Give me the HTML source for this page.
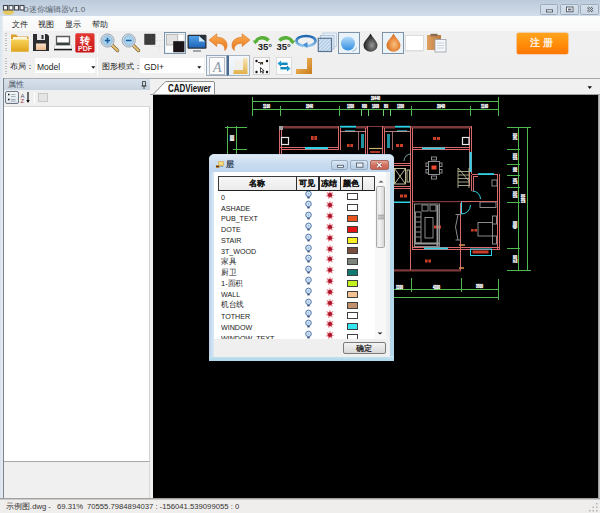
<!DOCTYPE html>
<html><head><meta charset="utf-8">
<style>
*{margin:0;padding:0;box-sizing:border-box}
html,body{width:600px;height:513px;overflow:hidden;background:#f0f0f0;font-family:"Liberation Sans",sans-serif;font-size:9px;color:#000}
.a{position:absolute}
.t{position:absolute;white-space:nowrap;line-height:1}
#title{left:0;top:0;width:600px;height:16px;background:linear-gradient(#bccbdc,#d2dde9)}
#menu{left:3px;top:16px;width:597px;height:15px;background:linear-gradient(#fbfcfd,#f8f8f7)}
#tb1{left:3px;top:31px;width:597px;height:24px;background:#f0f0f0}
#tb2{left:3px;top:55px;width:597px;height:23px;background:#efefef}
#lframe{left:0;top:16px;width:3px;height:483px;background:linear-gradient(90deg,#dae3ed,#e6ecf3)}
#rframe{left:598px;top:79px;width:2px;height:421px;background:linear-gradient(90deg,#8c8c8c,#d4d4d4)}
#lp{left:3px;top:78px;width:150px;height:420px;background:#f0f0f0;border-left:1px solid #7e848c}
#lphead{left:4px;top:78px;width:147px;height:11.5px;background:linear-gradient(#d8e2ec,#c6d2df);border-top:1px solid #a8aeb4}
#list{left:4px;top:106px;width:146px;height:356px;background:#fff;border-bottom:1px solid #a8a8a8;border-top:1px solid #d8d8d8;border-right:1px solid #d0d0d0}
#lower{left:4px;top:462px;width:146px;height:36px;border-right:1px solid #d8d8d8}
#tabstrip{left:150px;top:78px;width:450px;height:17px;background:#f0f0f0;border-top:1.5px solid #a8a8a8;border-bottom:1.5px solid #a0a0a0}
#view{left:153px;top:95px;width:445px;height:403px;background:#000}
#status{left:0;top:498px;width:600px;height:15px;background:linear-gradient(#8a8a8a 0,#b8b8b8 1px,#dcdcdc 2px,#efeeec 2px)}
.sep{position:absolute;width:1px;background:#c8ccd2;border-right:1px solid #fff}
.grip{position:absolute;width:1.5px;background:repeating-linear-gradient(#bcc2c8 0 1px,transparent 1px 2.5px)}
.mb2{position:absolute;top:160px;height:9.5px;border:1px solid #98acc2;border-radius:2px;background:linear-gradient(#dce8f4,#c6d8ea 50%,#b8cee4)}
.mbtn{position:absolute;top:4px;height:11px;border:1px solid #9cadc0;border-radius:1.5px;background:linear-gradient(#d6e0eb,#ccd8e5)}
</style></head><body>
<div id="title" class="a"></div>
<div id="lframe" class="a"></div>
<div id="rframe" class="a"></div>
<div id="menu" class="a"></div>
<div id="tb1" class="a"></div>
<div id="tb2" class="a"></div>
<div id="lp" class="a"></div>
<div id="lphead" class="a"></div>
<div id="list" class="a"></div>
<div id="lower" class="a"></div>
<div id="tabstrip" class="a"></div>
<div id="view" class="a"></div>
<div id="status" class="a"></div>

<!-- title -->
<div class="t" style="left:23px;top:5.5px;font-size:8px;color:#5a6470">D迷你编辑器V1.0</div>
<div class="mbtn" style="left:540px;width:18px"></div>
<div class="mbtn" style="left:560px;width:19px"></div>
<div class="mbtn" style="left:580px;width:19px"></div>
<svg class="a" style="left:540px;top:4px" width="60" height="11" viewBox="0 0 60 11">
 <rect x="6.5" y="5.8" width="6" height="2.2" fill="#fff" stroke="#4a5460" stroke-width="0.9"/>
 <rect x="26.5" y="3" width="6.5" height="4.8" fill="#fff" stroke="#4a5460" stroke-width="0.9"/>
 <rect x="28" y="4.5" width="3.5" height="2" fill="#6a7480"/>
 <path d="M47.8 3.2l5 4.6M52.8 3.2l-5 4.6" stroke="#4a5460" stroke-width="2.2"/>
 <path d="M47.8 3.2l5 4.6M52.8 3.2l-5 4.6" stroke="#f4f6f8" stroke-width="0.9"/>
</svg>
<svg class="a" style="left:2px;top:4px" width="24" height="11" viewBox="0 0 24 11">
 <ellipse cx="6.5" cy="8" rx="5.5" ry="3" fill="#eac64a" opacity="0.85"/>
 <g fill="#f4f4f4" stroke="#3e4650" stroke-width="1.1">
  <rect x="1.5" y="1.5" width="4" height="4.5"/><rect x="7" y="1.5" width="4" height="4.5"/>
  <rect x="12.5" y="1.5" width="4" height="4.5"/><rect x="18" y="1.5" width="4" height="4.5"/>
 </g>
</svg>

<!-- toolbar1 -->
<div class="grip" style="left:5px;top:33px;height:20px"></div>
<svg class="a" style="left:10px;top:32px" width="20" height="21" viewBox="0 0 20 21">
 <defs><linearGradient id="fg" x1="0" y1="0" x2="0" y2="1"><stop offset="0" stop-color="#f7d35a"/><stop offset="1" stop-color="#e1a41c"/></linearGradient></defs>
 <path d="M1 2.5h5l2 2h10.5v15H1z" fill="#d9a030"/>
 <path d="M3 5h14v5H3z" fill="#fbf3dc"/>
 <path d="M1 7.5h17.5v12H1z" fill="url(#fg)"/>
 <path d="M1 7.5h17.5" stroke="#f9e6a0" stroke-width="1"/>
</svg>
<svg class="a" style="left:32px;top:33px" width="18" height="19" viewBox="0 0 18 19">
 <path d="M1 1h14l2 2v15H1z" fill="#2b2d30"/>
 <path d="M5 1h8v6H5z" fill="#e8e8e8"/>
 <path d="M9.5 2h2v4h-2z" fill="#2b2d30"/>
 <defs><linearGradient id="lg" x1="0" y1="0" x2="0" y2="1"><stop offset="0" stop-color="#fbe2c8"/><stop offset="1" stop-color="#e9b98c"/></linearGradient></defs>
 <path d="M4 10.5h10V17h-10z" fill="url(#lg)"/>
</svg>
<svg class="a" style="left:53px;top:34px" width="20" height="18" viewBox="0 0 20 18">
 <path d="M3.5 2.5h13v9h-13z" fill="#fdfdfd" stroke="#5a5a5a" stroke-width="1.3"/>
 <path d="M5 4h10v4.2H5z" fill="#ffffff"/>
 <path d="M4 8.5h12v3h-12z" fill="#3a4240"/>
 <path d="M1.5 11.5h17v3.5h-17z" fill="#fbfbfb" stroke="#c4c4c4" stroke-width="0.6"/>
 <path d="M1 15.6h18" stroke="#1a1a1a" stroke-width="1.5"/>
</svg>
<svg class="a" style="left:75px;top:33px" width="20" height="20" viewBox="0 0 20 20">
 <defs><linearGradient id="pg" x1="0" y1="0" x2="0" y2="1"><stop offset="0" stop-color="#e23a32"/><stop offset="1" stop-color="#c8141a"/></linearGradient></defs>
 <rect x="0.3" y="0.3" width="19.2" height="19.2" rx="1.5" fill="url(#pg)"/>
 <text x="10" y="10.8" font-size="10" font-weight="700" fill="#fff" text-anchor="middle" font-family="Liberation Sans">转</text>
 <text x="10" y="18.2" font-size="7" font-weight="700" fill="#fce8e8" text-anchor="middle" font-family="Liberation Sans" textLength="14" lengthAdjust="spacingAndGlyphs">PDF</text>
</svg>
<div class="sep" style="left:97px;top:33px;height:20px"></div>
<svg class="a" style="left:100px;top:33px" width="20" height="20" viewBox="0 0 20 20">
 <path d="M12.5 12.5l5 5" stroke="#7a6a40" stroke-width="3.4" stroke-linecap="round"/>
 <path d="M12.5 12.5l5 5" stroke="#e8c070" stroke-width="2" stroke-linecap="round"/>
 <circle cx="7.5" cy="7.5" r="6.6" fill="#d8dee6" stroke="#9aa8b6" stroke-width="1"/>
 <circle cx="7.5" cy="7.5" r="4.8" fill="#a8d6f2" stroke="#7aa0c0" stroke-width="0.6"/>
 <path d="M7.5 4.8v5.4M4.8 7.5h5.4" stroke="#1c5a9c" stroke-width="1.5"/>
</svg>
<svg class="a" style="left:121px;top:33px" width="20" height="20" viewBox="0 0 20 20">
 <path d="M12.5 12.5l5 5" stroke="#7a6a40" stroke-width="3.4" stroke-linecap="round"/>
 <path d="M12.5 12.5l5 5" stroke="#e8c070" stroke-width="2" stroke-linecap="round"/>
 <circle cx="7.7" cy="7.5" r="6.6" fill="#d8dee6" stroke="#9aa8b6" stroke-width="1"/>
 <circle cx="7.7" cy="7.5" r="4.8" fill="#a8d6f2" stroke="#7aa0c0" stroke-width="0.6"/>
 <path d="M4.9 7.5h5.6" stroke="#1c5a9c" stroke-width="1.5"/>
</svg>
<svg class="a" style="left:143px;top:33px" width="22" height="21" viewBox="0 0 22 21">
 <rect x="1.3" y="0.8" width="11" height="11" fill="#3a3a3a"/>
 <path d="M5 1v11M8.5 1v11M1.5 4.5h11M1.5 8h11" stroke="#444" stroke-width="0.5"/>
 <path d="M13 7.5h7M16 11v9M8 13.5h12" stroke="#e4e4e4" stroke-width="0.8"/>
</svg>
<div class="a" style="left:164px;top:32px;width:22px;height:22px;border:1px solid #7f93a8;background:#e9f1f9"></div>
<svg class="a" style="left:165px;top:33px" width="20" height="20" viewBox="0 0 20 20">
 <rect x="1" y="1" width="18" height="18" fill="#fafcfd"/>
 <rect x="1.5" y="1.5" width="11" height="10.5" fill="#e2e2e2" stroke="#9a9a9a" stroke-width="0.6"/>
 <rect x="13" y="1.5" width="6" height="6.5" fill="#fff" stroke="#ccc" stroke-width="0.5"/>
 <rect x="8.2" y="8.2" width="11.2" height="11" fill="#1b151a"/>
</svg>
<svg class="a" style="left:187px;top:34px" width="20" height="19" viewBox="0 0 20 19">
 <defs><linearGradient id="mg" x1="0" y1="0" x2="0" y2="1"><stop offset="0" stop-color="#4fa0e8"/><stop offset="1" stop-color="#1f66b8"/></linearGradient></defs>
 <rect x="0.5" y="0.8" width="19" height="14" rx="1" fill="#2a2f36"/>
 <rect x="1.8" y="2" width="16.4" height="11.5" fill="url(#mg)"/>
 <path d="M12 2h6.2v5.5z" fill="#2a2f36"/>
 <path d="M12 2l6.2 5.5H12z" fill="#cfe9fb"/>
 <path d="M6 16h8v2H6z" fill="#a0a4a8"/>
</svg>
<svg class="a" style="left:208px;top:33px" width="20" height="19" viewBox="0 0 20 19">
 <defs><linearGradient id="ug" x1="0" y1="0" x2="0" y2="1"><stop offset="0" stop-color="#fbae55"/><stop offset="1" stop-color="#e9761b"/></linearGradient></defs>
 <path d="M1 7L8.8 0.8V4.3C15 4.3 19 7.5 19 12.2C19 14.6 18 16.3 16.8 17.5C17.2 13 14.5 10.2 8.8 10.2V13.5Z" fill="url(#ug)" stroke="#d8701c" stroke-width="0.6"/>
</svg>
<svg class="a" style="left:231px;top:33px" width="20" height="19" viewBox="0 0 20 19">
 <path transform="matrix(-1 0 0 1 20 0)" d="M1 7L8.8 0.8V4.3C15 4.3 19 7.5 19 12.2C19 14.6 18 16.3 16.8 17.5C17.2 13 14.5 10.2 8.8 10.2V13.5Z" fill="url(#ug)" stroke="#d8701c" stroke-width="0.6"/>
</svg>
<svg class="a" style="left:252px;top:34px" width="22" height="19" viewBox="0 0 22 19">
 <path d="M2.2 7.5C4 2 12.5 -0.5 17.8 5.2C16.8 6.4 15.8 7.2 15.2 7.8C11.5 4.6 6.5 5 5.2 8.4Z" fill="#58b038"/>
 <path d="M0.6 6.4L6.6 7L3.2 10.2z" fill="#58b038"/>
 <text x="5.8" y="15.6" font-size="9.5" font-weight="700" fill="#1e1e1e" font-family="Liberation Sans">35°</text>
</svg>
<svg class="a" style="left:274px;top:34px" width="22" height="19" viewBox="0 0 22 19">
 <path transform="matrix(-1 0 0 1 22 0)" d="M2.2 7.5C4 2 12.5 -0.5 17.8 5.2C16.8 6.4 15.8 7.2 15.2 7.8C11.5 4.6 6.5 5 5.2 8.4Z" fill="#58b038"/>
 <path transform="matrix(-1 0 0 1 22 0)" d="M0.6 6.4L6.6 7L3.2 10.2z" fill="#58b038"/>
 <text x="2.5" y="15.8" font-size="9.5" font-weight="700" fill="#222" font-family="Liberation Sans">35°</text>
</svg>
<svg class="a" style="left:295px;top:34px" width="22" height="15" viewBox="0 0 22 15">
 <defs><linearGradient id="og" x1="0" y1="0" x2="0" y2="1"><stop offset="0" stop-color="#1a64b0"/><stop offset="1" stop-color="#8cc4ee"/></linearGradient></defs>
 <ellipse cx="11" cy="7" rx="9.5" ry="5" fill="none" stroke="url(#og)" stroke-width="2.6"/>
 <path d="M8 10.5l4.5-2.5v6z" fill="#4a8ed0"/>
</svg>
<svg class="a" style="left:317px;top:32px" width="21" height="21" viewBox="0 0 21 21">
 <defs><pattern id="hp" width="2.5" height="2.5" patternUnits="userSpaceOnUse" patternTransform="rotate(45)"><rect width="2.5" height="2.5" fill="#d6e6f6"/><rect width="1" height="2.5" fill="#a9c3de"/></pattern></defs>
 <rect x="6" y="1" width="13.5" height="13.5" fill="#e6eff8" stroke="#b8cadc" stroke-width="0.8"/>
 <rect x="3.5" y="3.5" width="13.5" height="13.5" fill="#dde9f5" stroke="#a8bcd2" stroke-width="0.8"/>
 <rect x="1.3" y="6.3" width="13.2" height="13.2" fill="url(#hp)" stroke="#5a7594" stroke-width="1.2"/>
</svg>
<div class="a" style="left:338px;top:32px;width:22px;height:22px;border:1px solid #7f93a8;background:#eaf2fa"></div>
<svg class="a" style="left:340px;top:36px" width="18" height="16" viewBox="0 0 18 16">
 <defs><linearGradient id="sg" x1="0" y1="0" x2="0" y2="1"><stop offset="0" stop-color="#b5dcfa"/><stop offset="1" stop-color="#2f8ee0"/></linearGradient></defs>
 <circle cx="8" cy="7.5" r="7" fill="url(#sg)"/>
 <path d="M16.5 11.5C16 13.5 14.5 14.8 12.5 15.2" fill="none" stroke="#7aa0c0" stroke-width="0.8"/>
</svg>
<svg class="a" style="left:362px;top:33px" width="17" height="19" viewBox="0 0 17 19">
 <defs><radialGradient id="dk" cx="0.6" cy="0.65" r="0.6"><stop offset="0" stop-color="#9a9a9a"/><stop offset="0.5" stop-color="#555"/><stop offset="1" stop-color="#1e1e1e"/></radialGradient></defs>
 <path d="M8.5 0.5C10 4 15.5 8.5 15.5 12.2A7 6.5 0 0 1 1.5 12.2C1.5 8.5 7 4 8.5 0.5Z" fill="url(#dk)"/>
</svg>
<div class="a" style="left:382px;top:32px;width:22px;height:22px;border:1px solid #7f93a8;background:#eaf2fa"></div>
<svg class="a" style="left:385px;top:33px" width="17" height="19" viewBox="0 0 17 19">
 <defs><radialGradient id="or" cx="0.55" cy="0.6" r="0.6"><stop offset="0" stop-color="#f8c080"/><stop offset="0.6" stop-color="#e8883a"/><stop offset="1" stop-color="#c86a20"/></radialGradient></defs>
 <path d="M8.5 0.5C10 4 15.5 8.5 15.5 12.2A7 6.5 0 0 1 1.5 12.2C1.5 8.5 7 4 8.5 0.5Z" fill="url(#or)"/>
</svg>
<div class="a" style="left:405px;top:35px;width:19px;height:16px;background:#fff;border:1px solid #dcdcdc;box-shadow:0 1px 0 #e6e6e6"></div>
<svg class="a" style="left:426px;top:33px" width="21" height="20" viewBox="0 0 21 20">
 <defs><linearGradient id="cb" x1="0" y1="0" x2="1" y2="0"><stop offset="0" stop-color="#e0a060"/><stop offset="1" stop-color="#b87a40"/></linearGradient></defs>
 <rect x="1" y="2" width="14" height="15" fill="url(#cb)"/>
 <rect x="4.5" y="0.8" width="7" height="2.5" fill="#8a6a50"/>
 <rect x="9" y="6.5" width="11" height="12.5" fill="#f4f6fa" stroke="#9aa0a8" stroke-width="0.8"/>
 <path d="M11 10h7M11 12.5h7M11 15h7" stroke="#c0c8d8" stroke-width="0.8"/>
</svg>
<div class="a" style="left:517px;top:33px;width:51px;height:20.5px;border-radius:1.5px;background:linear-gradient(#ffa41c,#ff8a08 60%,#ff7600);box-shadow:0 0 0 0.6px #f0b070"></div>
<div class="t" style="left:530px;top:38px;font-size:10px;font-weight:700;color:#fff4e4">注 册</div>

<!-- menu -->
<div class="t" style="left:12px;top:20.5px;font-size:8px;color:#222">文件</div>
<div class="t" style="left:38px;top:20.5px;font-size:8px;color:#222">视图</div>
<div class="t" style="left:65px;top:20.5px;font-size:8px;color:#222">显示</div>
<div class="t" style="left:92px;top:20.5px;font-size:8px;color:#222">帮助</div>

<!-- toolbar2 -->
<div class="grip" style="left:5px;top:58px;height:18px"></div>
<div class="t" style="left:10px;top:63px;font-size:8px;color:#222">布局：</div>
<div class="a" style="left:35px;top:58px;width:60px;height:15px;background:#fff"></div>
<div class="t" style="left:37px;top:63px;font-size:8.5px;color:#222">Model</div>
<svg class="a" style="left:90.5px;top:65.5px" width="5" height="4"><path d="M0.3 0.3h4l-2 2.4z" fill="#111"/></svg>
<div class="sep" style="left:97px;top:57px;height:19px"></div>
<div class="t" style="left:102px;top:63px;font-size:8px;color:#222">图形模式：</div>
<div class="a" style="left:140px;top:58px;width:64px;height:15px;background:#fff"></div>
<div class="t" style="left:144px;top:63px;font-size:8.5px;color:#222">GDI+</div>
<svg class="a" style="left:196.5px;top:65.5px" width="5" height="4"><path d="M0.3 0.3h4l-2 2.4z" fill="#111"/></svg>
<div class="sep" style="left:205px;top:57px;height:19px"></div>

<div class="a" style="left:206px;top:55px;width:21px;height:21px;border:1px solid #97a9bc;background:#eef4fa"></div>
<div class="a" style="left:209px;top:57px;width:16px;height:18px;border:1px solid #b8bcc2;background:#fbfbfb"></div>
<div class="t" style="left:213px;top:61px;font-family:'Liberation Serif',serif;font-style:italic;font-size:14px;color:#8a96a8">A</div>
<div class="a" style="left:227px;top:55px;width:23px;height:21px;border:1px solid #a5b5c6;border-left:2px solid #4a6a90;background:linear-gradient(#f4f8fc,#e6eef6)"></div>
<svg class="a" style="left:232px;top:57px" width="17" height="18" viewBox="0 0 17 18">
 <defs><linearGradient id="gl" x1="0" y1="0" x2="0" y2="1"><stop offset="0" stop-color="#f8e6b8"/><stop offset="1" stop-color="#e2b048"/></linearGradient></defs>
 <path d="M11 1h4.5v16H1.5v-4H11z" fill="url(#gl)"/>
 <path d="M3 3h8v10H3z" fill="#f2ece0" opacity="0.6"/>
</svg>
<div class="a" style="left:253px;top:57px;width:17px;height:18px;border:1px solid #d0d0d0;background:#fafafa"></div>
<svg class="a" style="left:253px;top:57px" width="17" height="18" viewBox="0 0 17 18">
 <circle cx="3.5" cy="4" r="1.2" fill="#111"/><circle cx="14" cy="4" r="1.2" fill="#111"/>
 <circle cx="3.5" cy="15" r="1.2" fill="#111"/><circle cx="14" cy="15" r="1.2" fill="#111"/>
 <path d="M5 5.5h2l0.8 1.5 0.8-1.5h1.5M9.5 5.5v2" stroke="#3a3020" stroke-width="1.1" fill="none"/>
 <path d="M7.5 10.5v5l1.2-1.2 1 2 0.8-0.4-1-2h1.6z" fill="#fff" stroke="#111" stroke-width="0.8"/>
</svg>
<div class="a" style="left:276px;top:57px;width:16px;height:18px;border:1px solid #dcdcdc;background:#fbfbfb"></div>
<svg class="a" style="left:276px;top:59px" width="16" height="14" viewBox="0 0 16 14">
 <path d="M1.5 4.5L5 1.5V3.5h6.5v2.5H5v1.5z" fill="#1c9ad0"/>
 <path d="M14.5 9.5L11 12.5V10.5H4.5V8H11V6.5z" fill="#1c9ad0"/>
 <path d="M4 6.5l2.5-1.5h5M12 7.5l-2.5 1.5h-5" stroke="#0a6a9a" stroke-width="0.8" fill="none"/>
</svg>
<svg class="a" style="left:295px;top:57px" width="18" height="18" viewBox="0 0 18 18">
 <defs><linearGradient id="gl2" x1="0" y1="0" x2="1" y2="1"><stop offset="0" stop-color="#f7c66a"/><stop offset="1" stop-color="#c87a1a"/></linearGradient></defs>
 <path d="M12 1h5v16H1v-5h11z" fill="url(#gl2)"/>
</svg>

<!-- left panel -->
<div class="t" style="left:8px;top:81px;font-size:8px;color:#4a5666">属性</div>
<svg class="a" style="left:141px;top:81px" width="6" height="8" viewBox="0 0 6 8"><path d="M1.5 0.5h3v4.5h-3z" fill="none" stroke="#444" stroke-width="0.9"/><path d="M0.5 5h5M3 5v3" stroke="#444" stroke-width="0.9"/></svg>

<!-- cad -->
<svg class="a" style="left:153px;top:94px" width="445" height="404" viewBox="153 94 445 404" shape-rendering="auto">
<g stroke="#50b850" stroke-width="1" fill="none">
 <path d="M252 101.5H498.5M252 109.5H498.5"/>
 <path d="M252.5 97V116M498.5 97V116M280.5 106V116M339.5 106V116M411.5 106V116M470.5 106V116"/>
 <path d="M361.5 116V109M368.5 116V109M383.5 116V109M390.5 116V109" stroke="#6ad06a"/>
 <path d="M227.5 126V154M236.5 126V154M225 127.5H247M233 149.5H247"/>
 <path d="M518.5 127V271M527.5 127V271M507 127.5H531M507 149.5H520M507 164.5H520M507 175.5H520M507 187.5H520M507 202.5H520M507 248.5H520M507 270.5H531"/>
 <path d="M393 289.5H498.5M393 297.5H498.5M498.5 279V300M411.5 278V292M461.5 278V292"/>
</g>
<g fill="#f0f0f0" stroke="#f0f0f0" stroke-width="0.5" font-family="Liberation Sans" font-size="5.4" font-weight="700">
<text x="371" y="100" textLength="9" lengthAdjust="spacingAndGlyphs">29440</text>
<text x="263" y="108" textLength="7" lengthAdjust="spacingAndGlyphs">1190</text>
<text x="306" y="108" textLength="7" lengthAdjust="spacingAndGlyphs">2940</text>
<text x="347" y="108" textLength="7" lengthAdjust="spacingAndGlyphs">1200</text>
<text x="362" y="108" textLength="5" lengthAdjust="spacingAndGlyphs">800</text>
<text x="372" y="108" textLength="7" lengthAdjust="spacingAndGlyphs">1000</text>
<text x="384" y="108" textLength="4" lengthAdjust="spacingAndGlyphs">800</text>
<text x="397" y="108" textLength="7" lengthAdjust="spacingAndGlyphs">1200</text>
<text x="437" y="108" textLength="8" lengthAdjust="spacingAndGlyphs">2940</text>
<text x="481" y="108" textLength="7" lengthAdjust="spacingAndGlyphs">1190</text>
<text x="396" y="289" textLength="7" lengthAdjust="spacingAndGlyphs">2200</text>
<text x="433" y="289" textLength="7" lengthAdjust="spacingAndGlyphs">4200</text>
<text x="476" y="288" textLength="7" lengthAdjust="spacingAndGlyphs">3500</text>
<text transform="translate(517.3 140) rotate(-90)" x="0" y="0" textLength="7" lengthAdjust="spacingAndGlyphs">2400</text>
<text transform="translate(517.3 160) rotate(-90)" x="0" y="0" textLength="7" lengthAdjust="spacingAndGlyphs">1500</text>
<text transform="translate(517.3 172) rotate(-90)" x="0" y="0" textLength="5" lengthAdjust="spacingAndGlyphs">900</text>
<text transform="translate(517.3 184) rotate(-90)" x="0" y="0" textLength="6" lengthAdjust="spacingAndGlyphs">1200</text>
<text transform="translate(517.3 198) rotate(-90)" x="0" y="0" textLength="7" lengthAdjust="spacingAndGlyphs">1500</text>
<text transform="translate(517.3 229) rotate(-90)" x="0" y="0" textLength="8" lengthAdjust="spacingAndGlyphs">4500</text>
<text transform="translate(517.3 263) rotate(-90)" x="0" y="0" textLength="8" lengthAdjust="spacingAndGlyphs">2100</text>
<text transform="translate(525.3 203) rotate(-90)" x="0" y="0" textLength="9" lengthAdjust="spacingAndGlyphs">12600</text>
<text transform="translate(234.3 141) rotate(-90)" x="0" y="0" textLength="6" lengthAdjust="spacingAndGlyphs">800</text>
</g>
<!-- brown top walls -->
<g fill="#7e3a3a">
 <rect x="279" y="126" width="60" height="2.5"/>
 <rect x="356" y="126" width="12" height="2.5"/>
 <rect x="368" y="126" width="15" height="1"/>
 <rect x="383" y="126" width="12" height="2.5"/>
 <rect x="411" y="126" width="61" height="2.5"/>
 <rect x="412" y="201" width="58" height="1.2"/>
 <rect x="393" y="269.3" width="68" height="2.2"/>
</g>
<!-- pink double walls -->
<g stroke="#d86a6a" stroke-width="1" fill="none">
 <path d="M279.5 126V154M281.5 129V154"/>
 <path d="M338.5 126V150M340.5 128V150"/>
 <path d="M280 147.5H338M282 149.5H338"/>
 <path d="M365.5 128V155M367.5 126V155"/>
 <path d="M382.5 126V155M384.5 128V155"/>
 <path d="M410.5 126V270M412.5 128V250"/>
 <path d="M469.5 128V186M471.5 126V174"/>
 <path d="M412 147.5H470M412 149.5H470"/>
 <path d="M393.5 163.5H411M393.5 165.5H411M393.5 186.5H411M394 188.5H411"/>
 <path d="M412 247.5H461M412 249.5H461"/>
 <path d="M460.5 203V270"/>
 <path d="M461 247.5H500M461 249.5H500"/>
 <path d="M497.5 174V250M499.5 174V250"/>
 <path d="M472 174.5H498M473 176.5H478"/>
</g>
<!-- cyan -->
<g fill="#2fd2e4">
 <rect x="305" y="147" width="23" height="2.2"/>
 <rect x="340" y="125.8" width="16" height="1.8"/>
 <rect x="395" y="125.8" width="15" height="1.8"/>
 <rect x="422" y="147.5" width="23" height="1.8"/>
 <rect x="469.5" y="152" width="2.2" height="20"/>
 <rect x="394" y="201.5" width="16" height="1.5"/>
 <rect x="424" y="247.5" width="24" height="1.8"/>
 <rect x="478" y="173.2" width="16" height="1.8"/>
 <rect x="361" y="134" width="3" height="14" opacity="0.7"/>
 <rect x="387" y="134" width="3" height="14" opacity="0.7"/>
 <rect x="345" y="130" width="10" height="2" opacity="0.6"/>
 <rect x="397" y="130" width="10" height="2" opacity="0.6"/>
</g>
<rect x="470.5" y="249" width="21" height="6.5" fill="none" stroke="#2fd2e4" stroke-width="1"/>
<rect x="472.5" y="250.5" width="16" height="3" fill="#c83a2a"/>
<!-- red text -->
<g fill="#f04a30">
<rect x="311" y="136" width="2.6" height="4" opacity="0.85"/><rect x="314.4" y="136" width="2.6" height="4" opacity="0.85"/>
<rect x="347" y="144" width="2.6" height="3" opacity="0.85"/><rect x="350.4" y="144" width="2.6" height="3" opacity="0.85"/>
<rect x="396" y="144" width="3.1" height="3" opacity="0.85"/><rect x="399.9" y="144" width="3.1" height="3" opacity="0.85"/>
<rect x="433" y="137" width="3.1" height="3" opacity="0.85"/><rect x="436.9" y="137" width="3.1" height="3" opacity="0.85"/>
<rect x="400" y="194.5" width="3.1" height="3" opacity="0.85"/><rect x="403.9" y="194.5" width="3.1" height="3" opacity="0.85"/>
<rect x="434" y="225.5" width="3.1" height="3" opacity="0.85"/><rect x="437.9" y="225.5" width="3.1" height="3" opacity="0.85"/>
<rect x="425" y="259.5" width="2.6" height="3" opacity="0.85"/><rect x="428.4" y="259.5" width="2.6" height="3" opacity="0.85"/>
<rect x="471" y="229" width="2.6" height="2.5" opacity="0.85"/><rect x="474.4" y="229" width="2.6" height="2.5" opacity="0.85"/>
<rect x="431.5" y="165.5" width="5" height="4"/>
<rect x="370" y="151" width="10" height="2" opacity="0.7"/>
</g>
<!-- white squares -->
<g stroke="#e8e8e8" stroke-width="1.2" fill="none">
 <rect x="281.5" y="137.5" width="7" height="7"/>
 <rect x="462.5" y="137.5" width="6.5" height="7"/>
</g>
<rect x="279" y="126" width="4" height="4" fill="#a0a0a0"/>
<!-- gray furniture -->
<g stroke="#9a9a9a" stroke-width="0.9" fill="none">
 <rect x="428.5" y="161.5" width="11" height="13"/>
 <rect x="431.5" y="157" width="5" height="3"/><rect x="431.5" y="176" width="5" height="3"/>
 <rect x="426" y="163" width="2.5" height="3.5"/><rect x="426" y="169.5" width="2.5" height="3.5"/>
 <rect x="439.5" y="163" width="2.5" height="3.5"/><rect x="439.5" y="169.5" width="2.5" height="3.5"/>
 <rect x="414.5" y="204" width="25" height="42.5"/>
 <path d="M437.5 205V246M415 243.5H439" stroke-width="2"/>
 <rect x="415.5" y="212" width="5.5" height="31"/>
 <path d="M415.5 217H421M415.5 222H421M415.5 227H421M415.5 232H421M415.5 237H421"/>
 <rect x="425" y="217.5" width="8" height="20.5"/>
 <rect x="422" y="205" width="6" height="6"/><rect x="430" y="205" width="6" height="6"/>
 <path d="M455.5 214.5H461M455.5 240H461M458 215L455.5 227L458 240"/>
 <rect x="478" y="222.5" width="14.5" height="13.5"/>
 <rect x="492.5" y="216" width="4" height="8"/><rect x="492.5" y="236" width="4" height="8"/>
 <rect x="480" y="202" width="16" height="5.5"/>
 <rect x="492" y="180" width="5" height="6"/>
 <path d="M404 161A7 7 0 0 1 411 154" stroke="#8ab0b0"/>
</g>
<!-- elevator -->
<g stroke="#d0cca0" stroke-width="0.9" fill="none">
 <rect x="394.5" y="168.5" width="11" height="15.5"/>
 <path d="M394.5 168.5L405.5 184M405.5 168.5L394.5 184"/>
 <rect x="407" y="170" width="2.5" height="12"/>
</g>
<!-- stairs -->
<g stroke="#c8c8a0" stroke-width="0.8" fill="none">
 <path d="M458 168V188M469 168V188M458 171.5H469M458 175H469M458 178.5H469M458 182H469M458 185.5H469M458 168L469 181"/>
 <path d="M369 148.5H382" stroke="#c8b070" stroke-width="1.2"/>
</g>
<!-- cyan door arcs -->
<g stroke="#2fd2e4" stroke-width="1" fill="none">
 <path d="M461.5 201V214"/>
 <path d="M461.5 214A9 9 0 0 0 470.5 205"/>
 <path d="M472.5 191A8 8 0 0 1 480.5 199"/>
</g>
<g stroke="#d06868" stroke-width="1" fill="none">
 <path d="M471.5 175V191M473.5 176V191"/>
 <path d="M340 131.5H366M385 131.5H410" stroke="#e0a0a0" stroke-width="0.8"/>
 <path d="M358.5 132V150M392.5 132V150" stroke="#c08080" stroke-width="0.8"/>
 <path d="M461 201.5H498"/>
</g>
<path d="M459 245h6M459 268h5" stroke="#e09050" stroke-width="1.5"/>
</svg>
<!-- dialog -->
<div class="a" style="left:208.5px;top:154px;width:185.5px;height:206.8px;border-radius:5px 5px 1px 1px;background:linear-gradient(90deg,#b6cfe6 0,#d6e6f4 4px,#c4daee 50%,#b4d6ea 100%)"></div>
<div class="a" style="left:208.5px;top:356.3px;width:185.5px;height:4.5px;background:linear-gradient(#c8e4f0,#acd6ea)"></div>
<div class="a" style="left:209px;top:154.5px;width:184.5px;height:17.5px;border-radius:4.5px 4.5px 0 0;background:linear-gradient(#e0eaf5,#cadcef 50%,#bed6ee)"></div>
<div class="a" style="left:213.5px;top:171.5px;width:176px;height:185px;background:#efefef;border-top:1px solid #f4f8fc"></div>
<div class="a" style="left:385px;top:172px;width:4px;height:185px;background:#eef0f2"></div>
<div class="a" style="left:213.5px;top:172px;width:172px;height:167px;background:#fff"></div>
<svg class="a" style="left:215px;top:160px" width="10" height="9" viewBox="0 0 10 9"><path d="M3.5 1.5h5v4h-5z" fill="#f6dc78" stroke="#d0a040" stroke-width="0.6"/><path d="M1 5h3.5v3H1z" fill="#c08a40"/><path d="M1 6.5h3" stroke="#503a20" stroke-width="1"/><path d="M5 6.5h3" stroke="#8aa0c0" stroke-width="1"/></svg>
<div class="t" style="left:226px;top:160.5px;font-size:8px;font-weight:700;color:#25324a">层</div>
<div class="mb2" style="left:331px;width:17px"></div>
<div class="mb2" style="left:350px;width:18px"></div>
<div class="a" style="left:370px;top:160px;width:18.5px;height:9.5px;border:1px solid #a86a60;border-radius:2px;background:linear-gradient(#e8a494,#d47262 50%,#c86250)"></div>
<svg class="a" style="left:335px;top:162px" width="50" height="6" viewBox="0 0 50 6"><rect x="2.5" y="3.3" width="6" height="2" fill="#fff" stroke="#4a5666" stroke-width="0.8"/><rect x="21.5" y="1" width="6.5" height="4.2" fill="#e8eef4" stroke="#4a5666" stroke-width="0.8"/><path d="M42 0.8l4.5 4.4M46.5 0.8L42 5.2" stroke="#7a3a30" stroke-width="2.4"/><path d="M42 0.8l4.5 4.4M46.5 0.8L42 5.2" stroke="#fff" stroke-width="1.3"/></svg>
<!-- grid header -->
<div class="a" style="left:218px;top:176px;width:157px;height:14.8px;border:1.1px solid #3a3a3a;border-bottom:1.6px solid #222;background:linear-gradient(#f6f6f6,#ebebeb)"></div>
<div class="a" style="left:296px;top:176px;width:1.2px;height:14.5px;background:#2c2c2c"></div>
<div class="a" style="left:318.4px;top:176px;width:1.2px;height:14.5px;background:#2c2c2c"></div>
<div class="a" style="left:340.2px;top:176px;width:1.2px;height:14.5px;background:#2c2c2c"></div>
<div class="a" style="left:362px;top:176px;width:1.2px;height:14.5px;background:#2c2c2c"></div>
<div class="t" style="left:249px;top:180px;font-size:8px;font-weight:700;color:#111;-webkit-text-stroke:0.12px #111">名称</div>
<div class="t" style="left:299px;top:180px;font-size:8px;font-weight:700;color:#111;-webkit-text-stroke:0.12px #111">可见</div>
<div class="t" style="left:321px;top:180px;font-size:8px;font-weight:700;color:#111;-webkit-text-stroke:0.12px #111">冻结</div>
<div class="t" style="left:343px;top:180px;font-size:8px;font-weight:700;color:#111;-webkit-text-stroke:0.12px #111">颜色</div>
<div class="a" style="left:214px;top:191px;width:161px;height:148px;overflow:hidden">
<div style="position:absolute;left:-214px;top:-191px;width:600px;height:513px">
<div class="t" style="left:221px;top:193.80px;font-size:7.5px;color:#222;transform:scaleX(0.95);transform-origin:0 0">0</div>
<svg class="a" style="left:304px;top:189.50px" width="9" height="10" viewBox="0 0 9 10"><circle cx="4.5" cy="3.9" r="2.8" fill="#d4e6f8" stroke="#5478a8" stroke-width="1"/><path d="M3.2 3.9h2.6M4.5 2.6v2.6" stroke="#9ab8d8" stroke-width="0.6"/><path d="M3.3 6.8h2.4v1.6H3.3z" fill="#3a5078"/></svg>
<svg class="a" style="left:325px;top:189.50px" width="10" height="10" viewBox="0 0 10 10"><path d="M5 0.6L5.8 3.1L8.4 2L7 4.4L9.4 5.4L6.9 6.1L7.6 8.8L5.2 7.3L3.4 9.3L3.2 6.6L0.6 6.2L2.6 4.5L1.4 2.1L4 3Z" fill="#e0485a" opacity="0.75"/><circle cx="5" cy="5" r="2" fill="#a8142a"/></svg>
<div class="a" style="left:347px;top:193.20px;width:11px;height:7px;background:#ffffff;border:1px solid #404040"></div>
<div class="t" style="left:221px;top:204.63px;font-size:7.5px;color:#222;transform:scaleX(0.95);transform-origin:0 0">ASHADE</div>
<svg class="a" style="left:304px;top:200.33px" width="9" height="10" viewBox="0 0 9 10"><circle cx="4.5" cy="3.9" r="2.8" fill="#d4e6f8" stroke="#5478a8" stroke-width="1"/><path d="M3.2 3.9h2.6M4.5 2.6v2.6" stroke="#9ab8d8" stroke-width="0.6"/><path d="M3.3 6.8h2.4v1.6H3.3z" fill="#3a5078"/></svg>
<svg class="a" style="left:325px;top:200.33px" width="10" height="10" viewBox="0 0 10 10"><path d="M5 0.6L5.8 3.1L8.4 2L7 4.4L9.4 5.4L6.9 6.1L7.6 8.8L5.2 7.3L3.4 9.3L3.2 6.6L0.6 6.2L2.6 4.5L1.4 2.1L4 3Z" fill="#e0485a" opacity="0.75"/><circle cx="5" cy="5" r="2" fill="#a8142a"/></svg>
<div class="a" style="left:347px;top:204.03px;width:11px;height:7px;background:#ffffff;border:1px solid #404040"></div>
<div class="t" style="left:221px;top:215.46px;font-size:7.5px;color:#222;transform:scaleX(0.95);transform-origin:0 0">PUB_TEXT</div>
<svg class="a" style="left:304px;top:211.16px" width="9" height="10" viewBox="0 0 9 10"><circle cx="4.5" cy="3.9" r="2.8" fill="#d4e6f8" stroke="#5478a8" stroke-width="1"/><path d="M3.2 3.9h2.6M4.5 2.6v2.6" stroke="#9ab8d8" stroke-width="0.6"/><path d="M3.3 6.8h2.4v1.6H3.3z" fill="#3a5078"/></svg>
<svg class="a" style="left:325px;top:211.16px" width="10" height="10" viewBox="0 0 10 10"><path d="M5 0.6L5.8 3.1L8.4 2L7 4.4L9.4 5.4L6.9 6.1L7.6 8.8L5.2 7.3L3.4 9.3L3.2 6.6L0.6 6.2L2.6 4.5L1.4 2.1L4 3Z" fill="#e0485a" opacity="0.75"/><circle cx="5" cy="5" r="2" fill="#a8142a"/></svg>
<div class="a" style="left:347px;top:214.86px;width:11px;height:7px;background:#e8541e;border:1px solid #404040"></div>
<div class="t" style="left:221px;top:226.29px;font-size:7.5px;color:#222;transform:scaleX(0.95);transform-origin:0 0">DOTE</div>
<svg class="a" style="left:304px;top:221.99px" width="9" height="10" viewBox="0 0 9 10"><circle cx="4.5" cy="3.9" r="2.8" fill="#d4e6f8" stroke="#5478a8" stroke-width="1"/><path d="M3.2 3.9h2.6M4.5 2.6v2.6" stroke="#9ab8d8" stroke-width="0.6"/><path d="M3.3 6.8h2.4v1.6H3.3z" fill="#3a5078"/></svg>
<svg class="a" style="left:325px;top:221.99px" width="10" height="10" viewBox="0 0 10 10"><path d="M5 0.6L5.8 3.1L8.4 2L7 4.4L9.4 5.4L6.9 6.1L7.6 8.8L5.2 7.3L3.4 9.3L3.2 6.6L0.6 6.2L2.6 4.5L1.4 2.1L4 3Z" fill="#e0485a" opacity="0.75"/><circle cx="5" cy="5" r="2" fill="#a8142a"/></svg>
<div class="a" style="left:347px;top:225.69px;width:11px;height:7px;background:#e41414;border:1px solid #404040"></div>
<div class="t" style="left:221px;top:237.12px;font-size:7.5px;color:#222;transform:scaleX(0.95);transform-origin:0 0">STAIR</div>
<svg class="a" style="left:304px;top:232.82px" width="9" height="10" viewBox="0 0 9 10"><circle cx="4.5" cy="3.9" r="2.8" fill="#d4e6f8" stroke="#5478a8" stroke-width="1"/><path d="M3.2 3.9h2.6M4.5 2.6v2.6" stroke="#9ab8d8" stroke-width="0.6"/><path d="M3.3 6.8h2.4v1.6H3.3z" fill="#3a5078"/></svg>
<svg class="a" style="left:325px;top:232.82px" width="10" height="10" viewBox="0 0 10 10"><path d="M5 0.6L5.8 3.1L8.4 2L7 4.4L9.4 5.4L6.9 6.1L7.6 8.8L5.2 7.3L3.4 9.3L3.2 6.6L0.6 6.2L2.6 4.5L1.4 2.1L4 3Z" fill="#e0485a" opacity="0.75"/><circle cx="5" cy="5" r="2" fill="#a8142a"/></svg>
<div class="a" style="left:347px;top:236.52px;width:11px;height:7px;background:#f8f020;border:1px solid #404040"></div>
<div class="t" style="left:221px;top:247.95px;font-size:7.5px;color:#222;transform:scaleX(0.95);transform-origin:0 0">3T_WOOD</div>
<svg class="a" style="left:304px;top:243.65px" width="9" height="10" viewBox="0 0 9 10"><circle cx="4.5" cy="3.9" r="2.8" fill="#d4e6f8" stroke="#5478a8" stroke-width="1"/><path d="M3.2 3.9h2.6M4.5 2.6v2.6" stroke="#9ab8d8" stroke-width="0.6"/><path d="M3.3 6.8h2.4v1.6H3.3z" fill="#3a5078"/></svg>
<svg class="a" style="left:325px;top:243.65px" width="10" height="10" viewBox="0 0 10 10"><path d="M5 0.6L5.8 3.1L8.4 2L7 4.4L9.4 5.4L6.9 6.1L7.6 8.8L5.2 7.3L3.4 9.3L3.2 6.6L0.6 6.2L2.6 4.5L1.4 2.1L4 3Z" fill="#e0485a" opacity="0.75"/><circle cx="5" cy="5" r="2" fill="#a8142a"/></svg>
<div class="a" style="left:347px;top:247.35px;width:11px;height:7px;background:#7a4e3e;border:1px solid #404040"></div>
<div class="t" style="left:221px;top:257.88px;font-size:8px;color:#222;transform:scaleX(0.95);transform-origin:0 0">家具</div>
<svg class="a" style="left:304px;top:254.48px" width="9" height="10" viewBox="0 0 9 10"><circle cx="4.5" cy="3.9" r="2.8" fill="#d4e6f8" stroke="#5478a8" stroke-width="1"/><path d="M3.2 3.9h2.6M4.5 2.6v2.6" stroke="#9ab8d8" stroke-width="0.6"/><path d="M3.3 6.8h2.4v1.6H3.3z" fill="#3a5078"/></svg>
<svg class="a" style="left:325px;top:254.48px" width="10" height="10" viewBox="0 0 10 10"><path d="M5 0.6L5.8 3.1L8.4 2L7 4.4L9.4 5.4L6.9 6.1L7.6 8.8L5.2 7.3L3.4 9.3L3.2 6.6L0.6 6.2L2.6 4.5L1.4 2.1L4 3Z" fill="#e0485a" opacity="0.75"/><circle cx="5" cy="5" r="2" fill="#a8142a"/></svg>
<div class="a" style="left:347px;top:258.18px;width:11px;height:7px;background:#7c827c;border:1px solid #404040"></div>
<div class="t" style="left:221px;top:268.71px;font-size:8px;color:#222;transform:scaleX(0.95);transform-origin:0 0">厨卫</div>
<svg class="a" style="left:304px;top:265.31px" width="9" height="10" viewBox="0 0 9 10"><circle cx="4.5" cy="3.9" r="2.8" fill="#d4e6f8" stroke="#5478a8" stroke-width="1"/><path d="M3.2 3.9h2.6M4.5 2.6v2.6" stroke="#9ab8d8" stroke-width="0.6"/><path d="M3.3 6.8h2.4v1.6H3.3z" fill="#3a5078"/></svg>
<svg class="a" style="left:325px;top:265.31px" width="10" height="10" viewBox="0 0 10 10"><path d="M5 0.6L5.8 3.1L8.4 2L7 4.4L9.4 5.4L6.9 6.1L7.6 8.8L5.2 7.3L3.4 9.3L3.2 6.6L0.6 6.2L2.6 4.5L1.4 2.1L4 3Z" fill="#e0485a" opacity="0.75"/><circle cx="5" cy="5" r="2" fill="#a8142a"/></svg>
<div class="a" style="left:347px;top:269.01px;width:11px;height:7px;background:#0e7a72;border:1px solid #404040"></div>
<div class="t" style="left:221px;top:279.54px;font-size:8px;color:#222;transform:scaleX(0.95);transform-origin:0 0">1-面积</div>
<svg class="a" style="left:304px;top:276.14px" width="9" height="10" viewBox="0 0 9 10"><circle cx="4.5" cy="3.9" r="2.8" fill="#d4e6f8" stroke="#5478a8" stroke-width="1"/><path d="M3.2 3.9h2.6M4.5 2.6v2.6" stroke="#9ab8d8" stroke-width="0.6"/><path d="M3.3 6.8h2.4v1.6H3.3z" fill="#3a5078"/></svg>
<svg class="a" style="left:325px;top:276.14px" width="10" height="10" viewBox="0 0 10 10"><path d="M5 0.6L5.8 3.1L8.4 2L7 4.4L9.4 5.4L6.9 6.1L7.6 8.8L5.2 7.3L3.4 9.3L3.2 6.6L0.6 6.2L2.6 4.5L1.4 2.1L4 3Z" fill="#e0485a" opacity="0.75"/><circle cx="5" cy="5" r="2" fill="#a8142a"/></svg>
<div class="a" style="left:347px;top:279.84px;width:11px;height:7px;background:#c4f21e;border:1px solid #404040"></div>
<div class="t" style="left:221px;top:291.27px;font-size:7.5px;color:#222;transform:scaleX(0.95);transform-origin:0 0">WALL</div>
<svg class="a" style="left:304px;top:286.97px" width="9" height="10" viewBox="0 0 9 10"><circle cx="4.5" cy="3.9" r="2.8" fill="#d4e6f8" stroke="#5478a8" stroke-width="1"/><path d="M3.2 3.9h2.6M4.5 2.6v2.6" stroke="#9ab8d8" stroke-width="0.6"/><path d="M3.3 6.8h2.4v1.6H3.3z" fill="#3a5078"/></svg>
<svg class="a" style="left:325px;top:286.97px" width="10" height="10" viewBox="0 0 10 10"><path d="M5 0.6L5.8 3.1L8.4 2L7 4.4L9.4 5.4L6.9 6.1L7.6 8.8L5.2 7.3L3.4 9.3L3.2 6.6L0.6 6.2L2.6 4.5L1.4 2.1L4 3Z" fill="#e0485a" opacity="0.75"/><circle cx="5" cy="5" r="2" fill="#a8142a"/></svg>
<div class="a" style="left:347px;top:290.67px;width:11px;height:7px;background:#f2c290;border:1px solid #404040"></div>
<div class="t" style="left:221px;top:301.20px;font-size:8px;color:#222;transform:scaleX(0.95);transform-origin:0 0">机台线</div>
<svg class="a" style="left:304px;top:297.80px" width="9" height="10" viewBox="0 0 9 10"><circle cx="4.5" cy="3.9" r="2.8" fill="#d4e6f8" stroke="#5478a8" stroke-width="1"/><path d="M3.2 3.9h2.6M4.5 2.6v2.6" stroke="#9ab8d8" stroke-width="0.6"/><path d="M3.3 6.8h2.4v1.6H3.3z" fill="#3a5078"/></svg>
<svg class="a" style="left:325px;top:297.80px" width="10" height="10" viewBox="0 0 10 10"><path d="M5 0.6L5.8 3.1L8.4 2L7 4.4L9.4 5.4L6.9 6.1L7.6 8.8L5.2 7.3L3.4 9.3L3.2 6.6L0.6 6.2L2.6 4.5L1.4 2.1L4 3Z" fill="#e0485a" opacity="0.75"/><circle cx="5" cy="5" r="2" fill="#a8142a"/></svg>
<div class="a" style="left:347px;top:301.50px;width:11px;height:7px;background:#c0906c;border:1px solid #404040"></div>
<div class="t" style="left:221px;top:312.93px;font-size:7.5px;color:#222;transform:scaleX(0.95);transform-origin:0 0">TOTHER</div>
<svg class="a" style="left:304px;top:308.63px" width="9" height="10" viewBox="0 0 9 10"><circle cx="4.5" cy="3.9" r="2.8" fill="#d4e6f8" stroke="#5478a8" stroke-width="1"/><path d="M3.2 3.9h2.6M4.5 2.6v2.6" stroke="#9ab8d8" stroke-width="0.6"/><path d="M3.3 6.8h2.4v1.6H3.3z" fill="#3a5078"/></svg>
<svg class="a" style="left:325px;top:308.63px" width="10" height="10" viewBox="0 0 10 10"><path d="M5 0.6L5.8 3.1L8.4 2L7 4.4L9.4 5.4L6.9 6.1L7.6 8.8L5.2 7.3L3.4 9.3L3.2 6.6L0.6 6.2L2.6 4.5L1.4 2.1L4 3Z" fill="#e0485a" opacity="0.75"/><circle cx="5" cy="5" r="2" fill="#a8142a"/></svg>
<div class="a" style="left:347px;top:312.33px;width:11px;height:7px;background:#ffffff;border:1px solid #404040"></div>
<div class="t" style="left:221px;top:323.76px;font-size:7.5px;color:#222;transform:scaleX(0.95);transform-origin:0 0">WINDOW</div>
<svg class="a" style="left:304px;top:319.46px" width="9" height="10" viewBox="0 0 9 10"><circle cx="4.5" cy="3.9" r="2.8" fill="#d4e6f8" stroke="#5478a8" stroke-width="1"/><path d="M3.2 3.9h2.6M4.5 2.6v2.6" stroke="#9ab8d8" stroke-width="0.6"/><path d="M3.3 6.8h2.4v1.6H3.3z" fill="#3a5078"/></svg>
<svg class="a" style="left:325px;top:319.46px" width="10" height="10" viewBox="0 0 10 10"><path d="M5 0.6L5.8 3.1L8.4 2L7 4.4L9.4 5.4L6.9 6.1L7.6 8.8L5.2 7.3L3.4 9.3L3.2 6.6L0.6 6.2L2.6 4.5L1.4 2.1L4 3Z" fill="#e0485a" opacity="0.75"/><circle cx="5" cy="5" r="2" fill="#a8142a"/></svg>
<div class="a" style="left:347px;top:323.16px;width:11px;height:7px;background:#34e4f0;border:1px solid #404040"></div>
<div class="t" style="left:221px;top:334.59px;font-size:7.5px;color:#222;transform:scaleX(0.95);transform-origin:0 0">WINDOW_TEXT</div>
<svg class="a" style="left:304px;top:330.29px" width="9" height="10" viewBox="0 0 9 10"><circle cx="4.5" cy="3.9" r="2.8" fill="#d4e6f8" stroke="#5478a8" stroke-width="1"/><path d="M3.2 3.9h2.6M4.5 2.6v2.6" stroke="#9ab8d8" stroke-width="0.6"/><path d="M3.3 6.8h2.4v1.6H3.3z" fill="#3a5078"/></svg>
<svg class="a" style="left:325px;top:330.29px" width="10" height="10" viewBox="0 0 10 10"><path d="M5 0.6L5.8 3.1L8.4 2L7 4.4L9.4 5.4L6.9 6.1L7.6 8.8L5.2 7.3L3.4 9.3L3.2 6.6L0.6 6.2L2.6 4.5L1.4 2.1L4 3Z" fill="#e0485a" opacity="0.75"/><circle cx="5" cy="5" r="2" fill="#a8142a"/></svg>
<div class="a" style="left:347px;top:333.99px;width:11px;height:7px;background:#ffffff;border:1px solid #404040"></div>
</div></div>
<!-- scrollbar -->
<div class="a" style="left:375px;top:176px;width:11px;height:163px;background:#f8f8f8"></div>
<svg class="a" style="left:377.5px;top:180px" width="6" height="3" viewBox="0 0 6 3"><path d="M0.5 2.5h5l-2.5-2z" fill="#555"/></svg>
<svg class="a" style="left:377px;top:332px" width="6" height="3" viewBox="0 0 6 3"><path d="M0.5 0.5h5l-2.5 2z" fill="#222"/></svg>
<div class="a" style="left:375.5px;top:186px;width:9.5px;height:62px;border:1px solid #a8a8a8;border-radius:1.5px;background:linear-gradient(90deg,#e6e6e6,#f2f2f2 40%,#d6d6d6)"></div>
<svg class="a" style="left:377.5px;top:214px" width="6" height="6" viewBox="0 0 6 6"><path d="M0 1.2h6M0 3h6M0 4.8h6" stroke="#777" stroke-width="0.7"/></svg>
<!-- ok button -->
<div class="a" style="left:343px;top:342px;width:43px;height:12px;border:1px solid #7c7c7c;border-radius:2px;background:linear-gradient(#f4f4f4,#e6e6e6 50%,#d8d8d8)"></div>
<div class="t" style="left:356px;top:344.5px;font-size:8px;color:#111;-webkit-text-stroke:0.2px #111">确定</div>
<!-- tab -->
<svg class="a" style="left:152px;top:79px" width="446" height="16" viewBox="0 0 446 16">
 <path d="M1.5 15L12.5 3.5Q13.5 2.5 15 2.5H61Q62.5 2.5 62.5 4V15" fill="#fbfbfb" stroke="#909090" stroke-width="1"/>
 <path d="M435.5 7.2h4.5l-2.25 2.8z" fill="#111"/>
</svg>
<div class="t" style="left:168px;top:84px;font-size:10px;font-weight:700;color:#111;transform:scaleX(0.8);transform-origin:0 0">CADViewer</div>
<!-- lp toolbar -->
<div class="a" style="left:5px;top:91px;width:14px;height:13px;border:1px solid #6d7884;border-radius:2px;background:linear-gradient(#f4f6f8,#dfe4ea)"></div>
<svg class="a" style="left:6px;top:92px" width="12" height="11" viewBox="0 0 12 11">
 <path d="M2 2.5h1.5M2 7.5h1.5" stroke="#111" stroke-width="1.5"/>
 <path d="M5 2.5h4.5M5 4.5h4.5M5 7.5h4.5M5 9h4.5" stroke="#8898a8" stroke-width="0.7"/>
</svg>
<svg class="a" style="left:20px;top:91px" width="11" height="13" viewBox="0 0 11 13">
 <text x="0.5" y="6.5" font-size="6" font-family="Liberation Sans" fill="#5a4e6a">A</text>
 <text x="0.5" y="12" font-size="6" font-family="Liberation Sans" fill="#a04050">Z</text>
 <path d="M8 1v10" stroke="#111" stroke-width="1.2"/><path d="M6.3 9h3.4l-1.7 3z" fill="#111"/>
</svg>
<div class="sep" style="left:34px;top:92px;height:12px"></div>
<div class="a" style="left:38px;top:93px;width:10px;height:9px;border:1px solid #c8c8c8;background:#e4e4e4"></div>

<!-- status -->
<svg class="a" style="left:588px;top:502px" width="11" height="10" viewBox="0 0 11 10"><g fill="#b0b0b0"><rect x="8" y="1" width="1.5" height="1.5"/><rect x="8" y="4.5" width="1.5" height="1.5"/><rect x="4.5" y="4.5" width="1.5" height="1.5"/><rect x="8" y="8" width="1.5" height="1.5"/><rect x="4.5" y="8" width="1.5" height="1.5"/><rect x="1" y="8" width="1.5" height="1.5"/></g></svg>

<div class="t" style="left:6px;top:503px;font-size:7.7px;color:#333">示例图.dwg -</div>
<div class="t" style="left:57px;top:503px;font-size:7.7px;color:#333">69.31%</div>
<div class="t" style="left:87px;top:503px;font-size:7.7px;color:#333">70555.7984894037 : -156041.539099055 : 0</div>
</body></html>
